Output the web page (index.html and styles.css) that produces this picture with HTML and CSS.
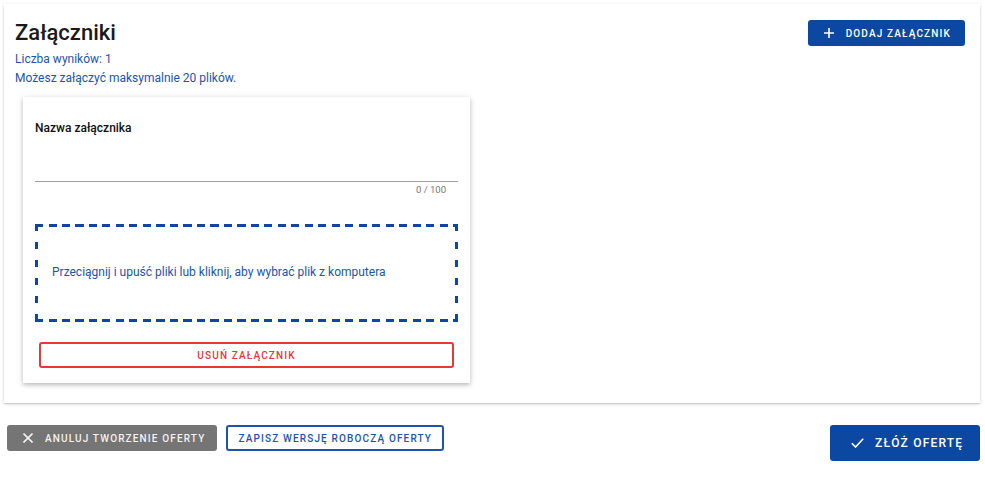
FILE: index.html
```html
<!DOCTYPE html>
<html lang="pl">
<head>
<meta charset="utf-8">
<title>Załączniki</title>
<link rel="stylesheet" href="styles.css">
</head>
<body>
<section class="panel">
  <div class="panel-header">
    <div class="title-block">
      <h1 class="title">Załączniki</h1>
      <p class="info">Liczba wyników: 1</p>
      <p class="info">Możesz załączyć maksymalnie 20 plików.</p>
    </div>
    <button class="btn btn-primary btn-add">
      <svg class="icon" width="10" height="10" viewBox="0 0 10 10"><path d="M5 0v10M0 5h10" stroke="currentColor" stroke-width="1.6" fill="none"/></svg>
      <span>Dodaj załącznik</span>
    </button>
  </div>

  <div class="card">
    <div class="field">
      <label class="field-label">Nazwa załącznika</label>
      <div class="field-input"></div>
      <div class="field-counter">0 / 100</div>
    </div>
    <div class="dropzone">
      <span>Przeciągnij i upuść pliki lub kliknij, aby wybrać plik z komputera</span>
    </div>
    <button class="btn btn-danger">Usuń załącznik</button>
  </div>
</section>

<div class="actions">
  <div class="actions-left">
    <button class="btn btn-grey">
      <svg class="icon" width="10" height="10" viewBox="0 0 10 10"><path d="M0.5 0.5l9 9M9.5 0.5l-9 9" stroke="currentColor" stroke-width="1.6" fill="none"/></svg>
      <span>Anuluj tworzenie oferty</span>
    </button>
    <button class="btn btn-outline">Zapisz wersję roboczą oferty</button>
  </div>
  <button class="btn btn-primary btn-submit">
    <svg class="icon" width="13" height="10" viewBox="0 0 13 10"><path d="M0.8 5.2l3.8 3.8 7.6-8.2" stroke="currentColor" stroke-width="1.6" fill="none"/></svg>
    <span>Złóż ofertę</span>
  </button>
</div>
</body>
</html>
```

FILE: styles.css
```css
* { box-sizing: border-box; }

body {
  margin: 0;
  background: #ffffff;
  font-family: Roboto, "Liberation Sans", Arial, sans-serif;
  color: #212121;
}

.panel {
  margin: 4px 5px 0 4px;
  padding: 16px 15px 20px 11px;
  background: #fff;
  box-shadow: 0 1px 3px rgba(0,0,0,0.18), 0 1px 1px rgba(0,0,0,0.08);
}

.panel-header {
  display: flex;
  justify-content: space-between;
  align-items: flex-start;
}

.title {
  margin: 0 0 4px;
  font-size: 22px;
  line-height: 26px;
  font-weight: 500;
  color: #1a1a1a;
}

.info {
  margin: 0;
  font-size: 12px;
  line-height: 19px;
  color: #1c54b0;
}

.btn {
  display: inline-flex;
  align-items: center;
  justify-content: center;
  height: 26px;
  border: none;
  border-radius: 3px;
  font-family: Roboto, "Liberation Sans", Arial, sans-serif;
  font-size: 10px;
  font-weight: 500;
  letter-spacing: 1.15px;
  text-transform: uppercase;
  cursor: pointer;
  white-space: nowrap;
}

.icon { display: block; flex: none; }

.btn-primary {
  background: #0c47a1;
  color: #fff;
}

.btn-add {
  padding: 0 14px 0 16px;
  gap: 12px;
}

.card {
  width: 447px;
  margin: 9px 0 0 8px;
  padding: 23px 12px 15px;
  background: #fff;
  box-shadow: 0 2px 4px rgba(0,0,0,0.2), 0 1px 8px rgba(0,0,0,0.1);
  display: flex;
  flex-direction: column;
}

.field-label {
  display: block;
  font-size: 12px;
  line-height: 16px;
  font-weight: 500;
  color: #111;
}

.field-input {
  height: 46px;
  border-bottom: 1px solid #a0a0a0;
}

.field-counter {
  margin-top: 2px;
  padding-right: 12px;
  text-align: right;
  font-size: 9.5px;
  line-height: 12px;
  color: #757575;
}

.dropzone {
  margin-top: 28px;
  height: 98px;
  padding: 0 3px 3px 17px;
  display: flex;
  align-items: center;
  font-size: 12px;
  line-height: 16px;
  color: #1c54b0;
  background:
    repeating-linear-gradient(90deg, #0d47a1 0 8px, transparent 8px 13.5px) left top / 100% 3px no-repeat,
    repeating-linear-gradient(90deg, #0d47a1 0 8px, transparent 8px 13.5px) left bottom / 100% 3px no-repeat,
    repeating-linear-gradient(180deg, #0d47a1 0 7px, transparent 7px 18px) left top / 3px 100% no-repeat,
    repeating-linear-gradient(180deg, #0d47a1 0 7px, transparent 7px 18px) right top / 3px 100% no-repeat;
}

.btn-danger {
  margin: 20px 4px 0;
  background: #fff;
  border: 2px solid #e53935;
  color: #e53935;
}

.actions {
  display: flex;
  justify-content: space-between;
  align-items: flex-start;
  margin: 22px 5px 0 7px;
}

.actions-left {
  display: flex;
  gap: 9px;
}

.btn-grey {
  background: #757575;
  color: #f2f2f2;
  padding: 0 12px 0 16px;
  gap: 12px;
}

.btn-outline {
  background: #fff;
  border: 2px solid #1c54b0;
  color: #1c54b0;
  padding: 0 10px;
}

.btn-submit {
  height: 36px;
  width: 150px;
  padding: 0 18px 0 21px;
  gap: 11px;
  font-size: 12px;
  letter-spacing: 1.2px;
  justify-content: flex-start;
}
```
